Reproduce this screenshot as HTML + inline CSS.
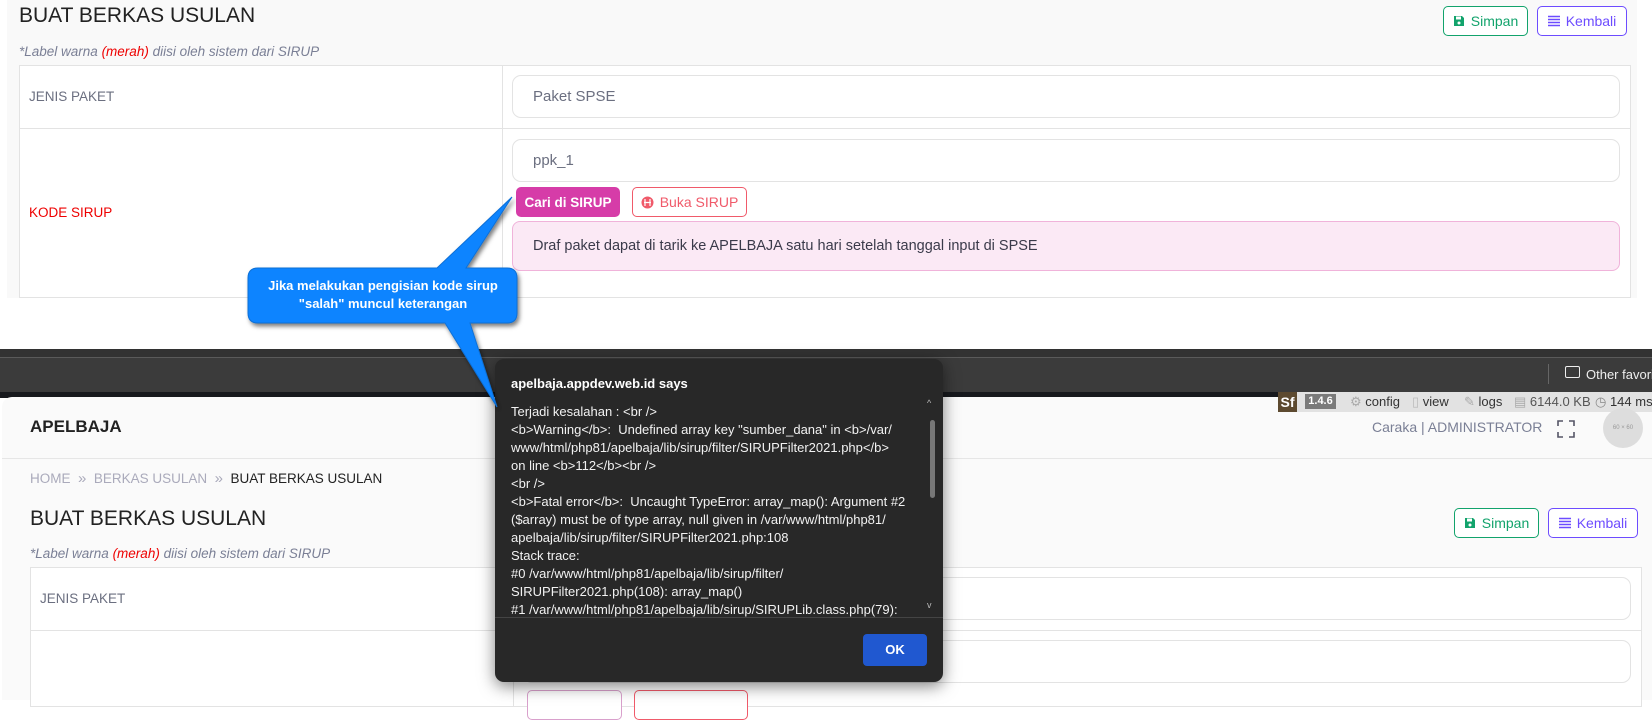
<!DOCTYPE html>
<html><head><meta charset="utf-8"><style>
*{margin:0;padding:0;box-sizing:border-box}
body{width:1652px;height:700px;overflow:hidden;background:#fff;font-family:"Liberation Sans",sans-serif;position:relative}
.a{position:absolute}
.t{white-space:nowrap}
.btn{position:absolute;border:1px solid;border-radius:5px;font-size:14px;display:flex;align-items:center;justify-content:center;gap:6px;background:#fff}
.inp{position:absolute;border:1px solid #e3e3e3;border-radius:9px;background:#fff;font-size:15px;color:#6b6f80;padding-left:20px;display:flex;align-items:center}
</style></head><body>
<div class="a" style="left:7px;top:0;width:1630px;height:298px;background:#f9f9f9"></div>
<div class="a t" style="left:19px;top:4px;font-size:21px;color:#222">BUAT BERKAS USULAN</div>
<div class="a t" style="left:19px;top:44px;font-size:13.5px;font-style:italic;color:#7a7f95">*Label warna <span style="color:#e00">(merah)</span> diisi oleh sistem dari SIRUP</div>
<div class="btn" style="left:1443px;top:6px;width:85px;height:30px;border-color:#12a36c;color:#12a36c"><svg width="12" height="12" viewBox="0 0 12 12"><path d="M1 1h8l2 2v8H1z" fill="#12a36c"/><rect x="3" y="1.5" width="5" height="3" fill="#fff"/><circle cx="6" cy="8" r="1.5" fill="#fff"/></svg>Simpan</div>
<div class="btn" style="left:1537px;top:6px;width:90px;height:30px;border-color:#6d4cff;color:#6d4cff"><svg width="12" height="12" viewBox="0 0 12 12"><path d="M0 1.5h12M0 4.5h12M0 7.5h12M0 10.5h12" stroke="#6d4cff" stroke-width="1.6"/></svg>Kembali</div>
<div class="a" style="left:19px;top:65px;width:1612px;height:233px;border:1px solid #e3e3e3;background:#fff"></div>
<div class="a" style="left:502px;top:65px;width:1px;height:233px;background:#e3e3e3"></div>
<div class="a" style="left:19px;top:128px;width:1612px;height:1px;background:#e3e3e3"></div>
<div class="a t" style="left:29px;top:89px;font-size:13.5px;color:#6b6f80">JENIS PAKET</div>
<div class="a t" style="left:29px;top:205px;font-size:13.5px;color:#e00">KODE SIRUP</div>
<div class="inp" style="left:512px;top:75px;width:1108px;height:43px">Paket SPSE</div>
<div class="inp" style="left:512px;top:139px;width:1108px;height:43px">ppk_1</div>
<div class="btn" style="left:516px;top:187px;width:104px;height:30px;background:#d63ca8;border-color:#d63ca8;color:#fff;font-weight:bold;font-size:13.5px">Cari di SIRUP</div>
<div class="btn" style="left:632px;top:187px;width:115px;height:30px;border-color:#f05a6a;color:#f05a6a"><svg width="13" height="13" viewBox="0 0 13 13"><circle cx="6.5" cy="6.5" r="6" fill="#f05a6a"/><path d="M4 3v7M9 3v7M3 6.5h7" stroke="#fff" stroke-width="1.2"/></svg>Buka SIRUP</div>
<div class="a t" style="left:512px;top:221px;width:1108px;height:50px;background:#fbe9f5;border:1px solid #f0b3da;border-radius:8px;font-size:14.5px;color:#3a3a4a;padding:16px 0 0 20px">Draf paket dapat di tarik ke APELBAJA satu hari setelah tanggal input di SPSE</div>
<div class="a" style="left:0;top:349px;width:1652px;height:9px;background:#323232"></div>
<div class="a" style="left:0;top:357px;width:1652px;height:1px;background:#5a5a5a"></div>
<div class="a" style="left:0;top:358px;width:1652px;height:34px;background:#3b3b3b"></div>
<div class="a" style="left:1548px;top:364px;width:1px;height:20px;background:#666"></div>
<div class="a" style="left:1565px;top:366px;width:15px;height:12px;border:1.5px solid #eee;border-radius:2px"></div>
<div class="a t" style="left:1586px;top:367px;font-size:13px;color:#eee">Other favorites</div>
<div class="a" style="left:0;top:392px;width:1652px;height:6px;background:#17191d"></div>
<div class="a" style="left:2px;top:397px;width:1650px;height:303px;background:#fafafa;border-radius:10px 0 0 0"></div>
<div class="a" style="left:1278px;top:392px;width:374px;height:20px;background:#e2e2e2"></div>
<div class="a t" style="left:1278px;top:392px;width:19px;height:20px;background:#5d4a30;color:#fff;font-weight:bold;font-size:14px;text-align:center;line-height:20px">Sf</div>
<div class="a t" style="left:1305px;top:394px;width:31px;height:15px;background:#7a7a7a;color:#fff;font-weight:bold;font-size:11px;text-align:center;line-height:15px">1.4.6</div>
<div class="a t" style="left:1350px;top:394px;font-size:13px;color:#333"><span style="color:#aaa">⚙</span> config</div>
<div class="a t" style="left:1412px;top:394px;font-size:13px;color:#333"><span style="color:#bbb">▯</span> view</div>
<div class="a t" style="left:1464px;top:394px;font-size:13px;color:#333"><span style="color:#aaa">✎</span> logs</div>
<div class="a t" style="left:1514px;top:394px;font-size:13px;color:#555"><span style="color:#aaa">▤</span> 6144.0 KB</div>
<div class="a t" style="left:1595px;top:394px;font-size:13px;color:#333"><span style="color:#888">◷</span> 144 ms</div>
<div class="a t" style="left:30px;top:417px;font-size:17px;font-weight:bold;color:#222">APELBAJA</div>
<div class="a t" style="left:1372px;top:419px;font-size:14px;color:#7a7f95">Caraka | ADMINISTRATOR</div>
<svg class="a" style="left:1557px;top:420px" width="18" height="18" viewBox="0 0 18 18" fill="none" stroke="#556" stroke-width="1.6"><path d="M1 6V1h5M12 1h5v5M17 12v5h-5M6 17H1v-5"/></svg>
<div class="a" style="left:1603px;top:408px;width:40px;height:40px;border-radius:50%;background:#ddd;font-size:6px;color:#999;text-align:center;line-height:40px">60 × 60</div>
<div class="a" style="left:2px;top:458px;width:1650px;height:1px;background:#e6e6e6"></div>
<div class="a t" style="left:30px;top:470px;font-size:13.5px;color:#aab">HOME &nbsp;<span style="font-size:15px">»</span>&nbsp; BERKAS USULAN &nbsp;<span style="font-size:15px">»</span>&nbsp; <span style="color:#222">BUAT BERKAS USULAN</span></div>
<div class="a t" style="left:30px;top:507px;font-size:21px;color:#222">BUAT BERKAS USULAN</div>
<div class="a t" style="left:30px;top:546px;font-size:13.5px;font-style:italic;color:#7a7f95">*Label warna <span style="color:#e00">(merah)</span> diisi oleh sistem dari SIRUP</div>
<div class="btn" style="left:1454px;top:508px;width:85px;height:30px;border-color:#12a36c;color:#12a36c"><svg width="12" height="12" viewBox="0 0 12 12"><path d="M1 1h8l2 2v8H1z" fill="#12a36c"/><rect x="3" y="1.5" width="5" height="3" fill="#fff"/><circle cx="6" cy="8" r="1.5" fill="#fff"/></svg>Simpan</div>
<div class="btn" style="left:1548px;top:508px;width:90px;height:30px;border-color:#6d4cff;color:#6d4cff"><svg width="12" height="12" viewBox="0 0 12 12"><path d="M0 1.5h12M0 4.5h12M0 7.5h12M0 10.5h12" stroke="#6d4cff" stroke-width="1.6"/></svg>Kembali</div>
<div class="a" style="left:30px;top:567px;width:1612px;height:140px;border:1px solid #e3e3e3;background:#fff"></div>
<div class="a" style="left:513px;top:567px;width:1px;height:140px;background:#e3e3e3"></div>
<div class="a" style="left:30px;top:630px;width:1612px;height:1px;background:#e3e3e3"></div>
<div class="a t" style="left:40px;top:591px;font-size:13.5px;color:#6b6f80">JENIS PAKET</div>
<div class="inp" style="left:523px;top:577px;width:1108px;height:43px"></div>
<div class="inp" style="left:523px;top:640px;width:1108px;height:43px"></div>
<div class="btn" style="left:527px;top:690px;width:95px;height:30px;border-color:#d9a0cc"></div>
<div class="btn" style="left:634px;top:690px;width:114px;height:30px;border-color:#f05a6a"></div>
<div class="a" style="left:495px;top:359px;width:448px;height:323px;background:#282828;border-radius:9px;box-shadow:0 4px 16px rgba(0,0,0,.5)"></div>
<div class="a t" style="left:511px;top:376px;font-size:13px;font-weight:bold;color:#fff">apelbaja.appdev.web.id says</div>
<div class="a" style="left:511px;top:403px;width:410px;height:214px;overflow:hidden;font-size:13px;line-height:18px;color:#f2f2f2;white-space:pre">Terjadi kesalahan : &lt;br /&gt;
&lt;b&gt;Warning&lt;/b&gt;:  Undefined array key "sumber_dana" in &lt;b&gt;/var/
www/html/php81/apelbaja/lib/sirup/filter/SIRUPFilter2021.php&lt;/b&gt;
on line &lt;b&gt;112&lt;/b&gt;&lt;br /&gt;
&lt;br /&gt;
&lt;b&gt;Fatal error&lt;/b&gt;:  Uncaught TypeError: array_map(): Argument #2
($array) must be of type array, null given in /var/www/html/php81/
apelbaja/lib/sirup/filter/SIRUPFilter2021.php:108
Stack trace:
#0 /var/www/html/php81/apelbaja/lib/sirup/filter/
SIRUPFilter2021.php(108): array_map()
#1 /var/www/html/php81/apelbaja/lib/sirup/SIRUPLib.class.php(79):</div>
<div class="a" style="left:495px;top:617px;width:448px;height:1px;background:#444"></div>
<div class="a" style="left:930px;top:420px;width:5px;height:78px;background:#777;border-radius:3px"></div>
<div class="a t" style="left:927px;top:398px;font-size:9px;color:#bbb">^</div>
<div class="a t" style="left:927px;top:600px;font-size:9px;color:#bbb">v</div>
<div class="a t" style="left:863px;top:634px;width:64px;height:32px;background:#2058d0;border-radius:4px;color:#fff;font-weight:bold;font-size:13px;text-align:center;line-height:32px">OK</div>
<svg class="a" style="left:0;top:0" width="1652" height="700">
<defs><filter id="s"><feDropShadow dx="2" dy="3" stdDeviation="2" flood-color="#000" flood-opacity=".5"/></filter></defs>
<path filter="url(#s)" fill="#0a84ff" stroke="#0a6fd6" stroke-width="1" d="M258 268 H437 L512 197 L466 268 H507 Q517 268 517 278 V313 Q517 323 507 323 H470 L497 407 L445 323 H258 Q248 323 248 313 V278 Q248 268 258 268 Z"/>
<text x="383" y="290" fill="#fff" font-family="Liberation Sans" font-weight="bold" font-size="13" text-anchor="middle">Jika melakukan pengisian kode sirup</text>
<text x="383" y="308" fill="#fff" font-family="Liberation Sans" font-weight="bold" font-size="13" text-anchor="middle">"salah" muncul keterangan</text>
</svg>
</body></html>
